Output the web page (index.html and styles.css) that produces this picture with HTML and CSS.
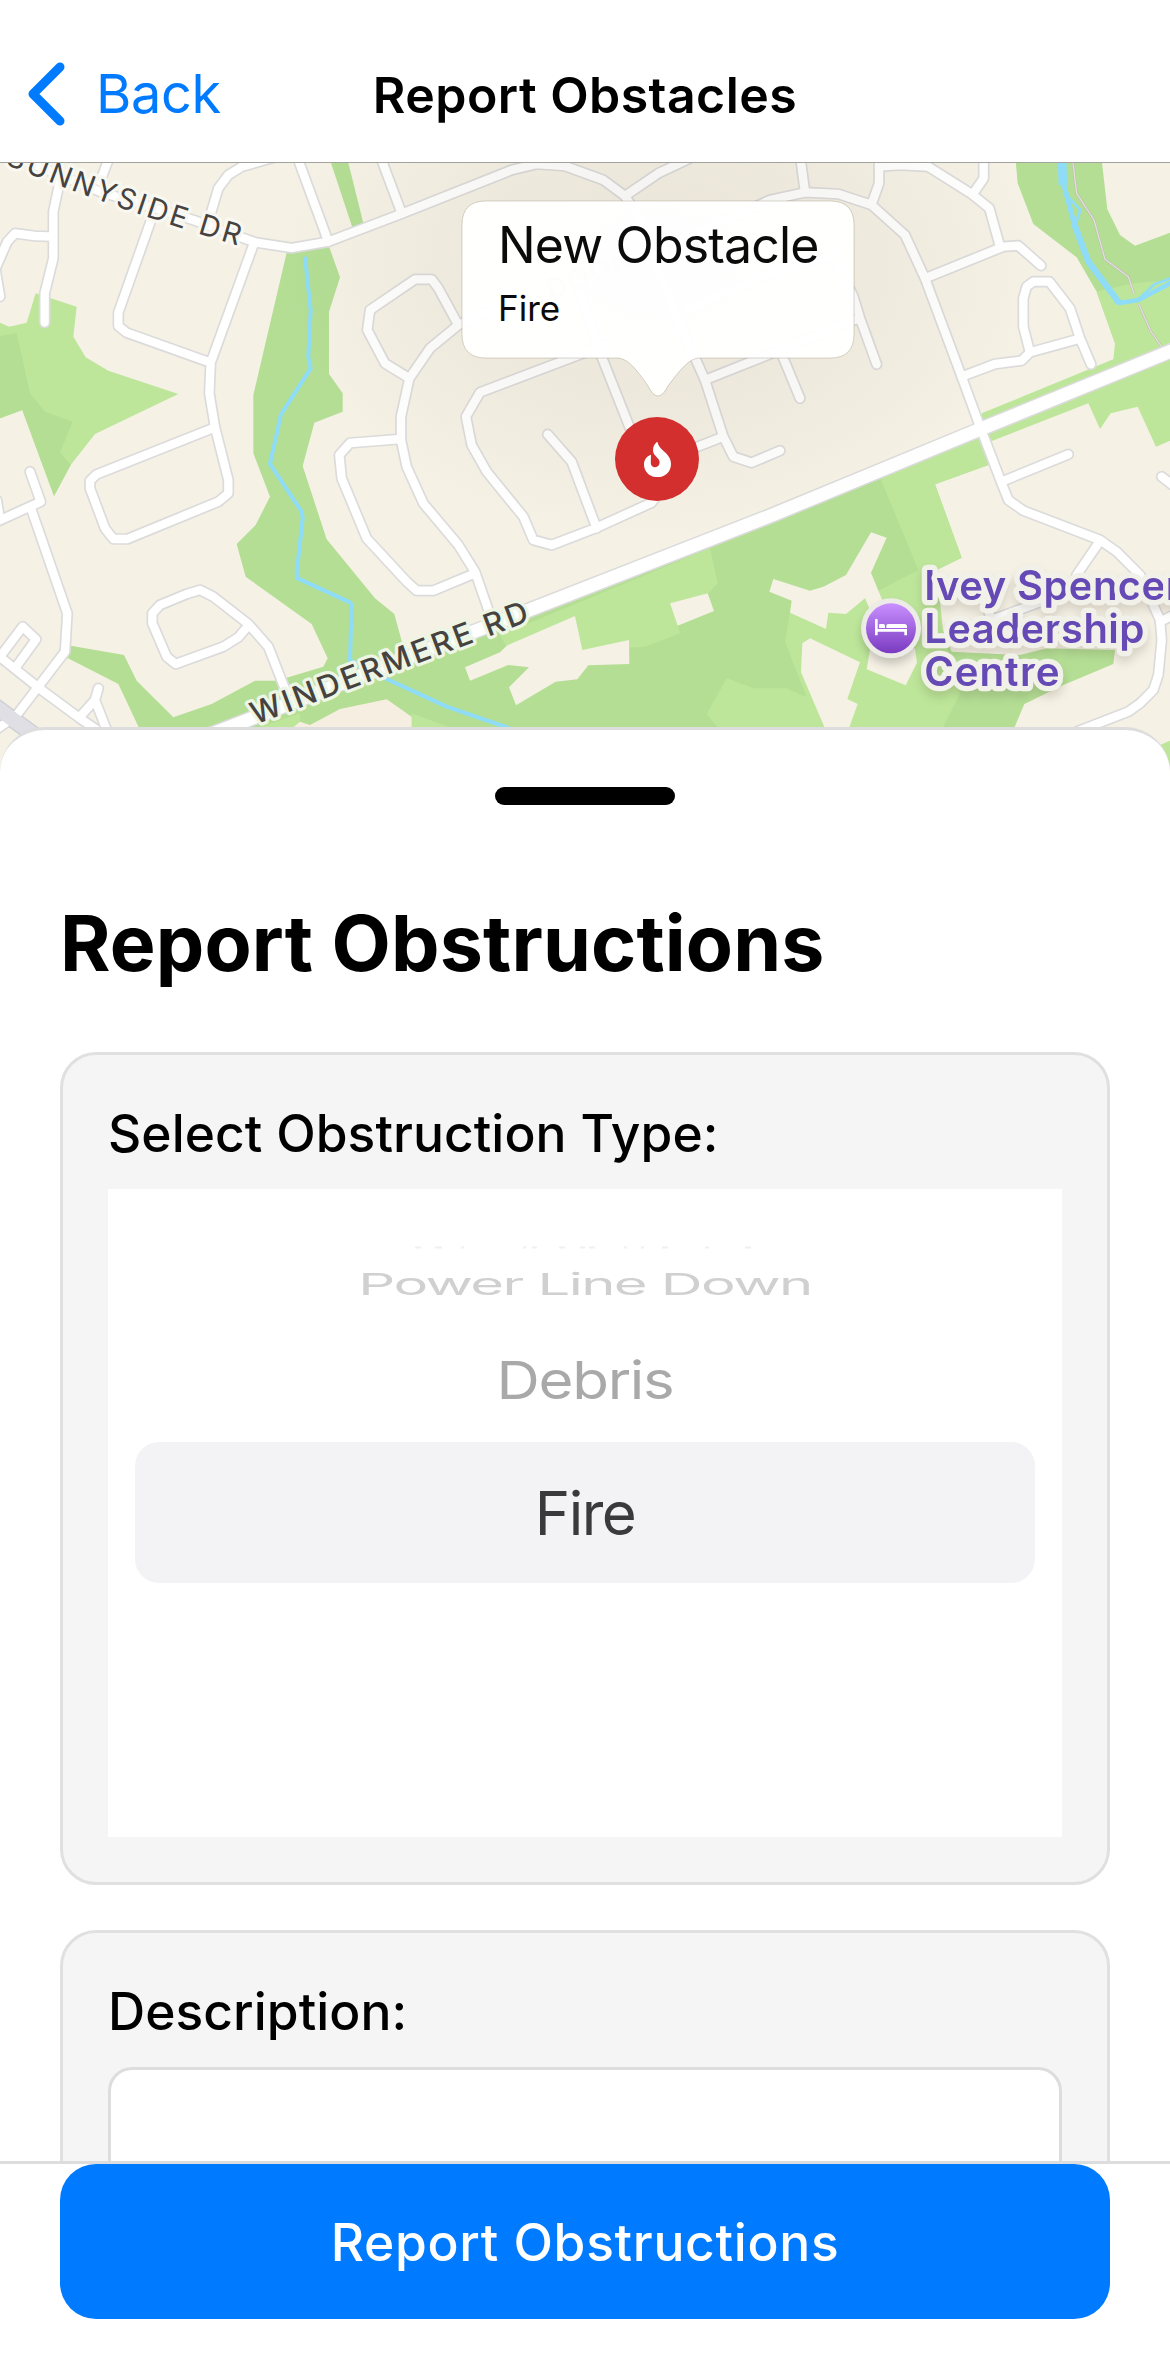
FILE: index.html
```html
<!DOCTYPE html>
<html lang="en">
<head>
<meta charset="utf-8">
<title>Report Obstacles</title>
<link rel="stylesheet" href="styles.css">
</head>
<body>
<div class="screen">
  <header class="nav">
    <a class="nav-back">
      <svg class="nav-chevron" viewBox="0 0 38 64" width="38" height="64"><path d="M33 5 6 32l27 27" fill="none" stroke="currentColor" stroke-width="9" stroke-linecap="round" stroke-linejoin="round"/></svg>
      <span class="nav-back-text">Back</span>
    </a>
    <h1 class="nav-title">Report Obstacles</h1>
  </header>

  <section class="map">
    <svg class="map-canvas" viewBox="0 489 3510 1911" width="1170" height="637">
      <defs>
        <linearGradient id="poi" x1="0" y1="0" x2="0" y2="1"><stop offset="0" stop-color="#c98fff"/><stop offset="1" stop-color="#7a3bc0"/></linearGradient>
        <radialGradient id="shade"><stop offset="0" stop-color="#5a5030" stop-opacity=".075"/><stop offset=".5" stop-color="#5a5030" stop-opacity=".05"/><stop offset="1" stop-color="#5a5030" stop-opacity="0"/></radialGradient>
        <filter id="soft" x="-20%" y="-20%" width="140%" height="140%"><feGaussianBlur stdDeviation="14"/></filter>
        <g id="streets">
          <path d="M325 480 300 545M180 540 160 635V775L134 880V968M160 710 105 708 45 700 22 725-20 820M-15 800 0 890"/>
          <path d="M455 655 355 938V978L380 998 632 1088M760 735 632 1088 628 1180 645 1282 685 1440V1480L655 1505 382 1617H340L315 1585 270 1465V1442L290 1423 645 1282"/>
          <path d="M-30 440 300 575 580 660 765 727 875 744 985 725 1200 643 1535 510 1610 492 1695 498 1810 540 1875 588 1975 520 2080 470"/>
          <path d="M625 665 655 565 685 525 725 500 830 470M895 480 985 725M1145 480 1205 640"/>
          <path d="M1875 588 1915 650 2025 940 2115 1140 2170 1310 2200 1370 2255 1388 2340 1352M2080 1345 2170 1310"/>
          <path d="M2050 720 2310 600 2415 577 2515 582 2615 615 2715 705 2775 835 2885 1130 2940 1280 3005 1450 3025 1500 3070 1532 3300 1620 3350 1655 3420 1725 3480 1860 3485 1920 3475 2025 3460 2070 3420 2110 3385 2135 3230 2195"/>
          <path d="M2402 480 2415 577M2637 480V550L2615 612M2637 500 2700 495 2785 500 2915 582 2968 625 3000 740M2951 480V535L2920 580M2775 835 3010 740 3055 737 3123 797"/>
          <path d="M2885 1130 2985 1092 3065 1082 3090 1057 3232 1018M3088 1050 3070 980V895L3080 860 3100 845H3148L3210 925 3240 1015 3273 1093"/>
          <path d="M2060 930 2360 800 2500 765 2560 890 2580 955 2630 1093M2340 1050 2400 1195M2115 1140 2340 1050 2575 955"/>
          <path d="M1228 1135 1155 1090 1102 990 1110 930 1245 838H1295L1315 865 1375 975 1290 1045 1228 1135 1203 1250V1320L1220 1400 1270 1510 1375 1635 1425 1715 1465 1830"/>
          <path d="M1375 975 1540 900M1203 1317 1050 1329 1018 1365 1025 1435 1100 1615 1220 1745 1250 1772H1300L1420 1722"/>
          <path d="M1820 1033 1440 1177 1398 1250 1415 1335 1460 1415 1570 1550 1600 1620 1655 1635 1785 1585 1955 1508 1975 1480M1790 1585 1715 1385 1643 1303M1740 870 1805 1070 1890 1285"/>
          <path d="M3005 1445 3205 1363M3485 1430 3530 1465M3295 1630 3230 1725M3530 1840 3480 1865M2960 1820 2975 1860 3230 1765"/>
          <path d="M90 1415 122 1505-20 1570M-10 1500 0 1560M93 1525 202 1840 195 1955 50 2145-20 2195M-20 1955 118 2065 240 2155 320 2210"/>
          <path d="M0 1970 68 1880 108 1918 45 2005M295 2065 285 2100 240 2150M285 2100 320 2190"/>
          <path d="M860 2080 805 1940 745 1872 640 1790 600 1770 560 1782 480 1815 457 1840V1870L500 1970 527 1992 670 1940 715 1912 742 1880"/>
        </g>
        <path id="sunnyside" d="M14 492Q350 630 716 737"/>
      </defs>

      <rect x="0" y="480" width="3510" height="1930" fill="#f5f1e5"/>

      <!-- parkland -->
      <g fill="#b3de94">
        <path d="M860 758 988 742 1020 832 987 935V1122L1028 1180V1235L943 1268 908 1398 980 1618 1125 1795 1183 1842 1215 1960 1580 1835 2940 1288 2965 1395 2805 1453 2885 1673 2810 1710 2800 1820 2855 1955 3060 1965 3140 1945 3345 1950 3340 1992 3190 2055 3073 2112 3040 2190H420L355 2052 198 1972 212 1937 372 1965 410 2042 520 2152 635 2112 765 2042H830L970 2000 983 1975 935 1872 737 1730 710 1632 767 1575 810 1490 760 1360V1185Z"/>
        <path d="M990 480H1043L1090 670 1057 682Z"/>
        <path d="M3047 480 3053 550 3100 672 3230 772 3290 875 3345 1030 3510 1050V698L3405 737 3360 705 3322 628 3305 480Z"/>
      </g>
      <g fill="#bde69a">
        <path d="M0 968 28 980 80 968 107 880 230 920 220 1010 257 1072 325 1112 535 1182 285 1302 212 1395 162 1488 100 1320 67 1230 0 1255Z"/>
        <path d="M1500 1905 2130 1645 2153 1750 2125 1780 2010 1810 2040 1900 1935 1940 1745 1950 1725 1848 1520 1940Z"/>
        <path d="M2640 1432 2960 1290 2965 1395 2805 1453 2885 1673 2810 1710 2830 1900 2880 2080 2825 2190H2160L2120 2142 2180 2035 2260 2065H2360L2420 2092 2355 1925 2375 1805 2600 1790 2755 1710Z"/>
        <path d="M3290 875 3345 1030 3340 1078 2945 1240 2950 1290 3510 1050V840L3400 850Z"/>
        <path d="M2940 1288 3510 1053V1322L3468 1340 3413 1220 3332 1240 3300 1287 3265 1210 2970 1325Z"/>
        <path d="M755 2190 900 2140V2190ZM1235 2140 1370 2190H1235ZM3510 2222 3480 2235 3510 2300Z"/>
      </g>
      <path fill="#b3de94" d="M0 1008 50 1000 90 1180 135 1235 218 1265 180 1357 212 1395 162 1488 100 1320 67 1230 0 1255Z"/>
      <g fill="#f5f1e5">
        <path d="M1395 2002 1500 1957 1520 1937 1725 1848 1747 1950 1887 1920 1888 1992 1765 1996 1732 2038 1667 2045 1548 2116 1527 2062 1587 2002 1525 1995 1410 2042Z"/>
        <path d="M2010 1810 2123 1780 2142 1833 2033 1877Z"/>
        <path d="M2320 1737 2430 1772 2470 1760 2538 1725 2613 1597 2660 1613 2613 1718 2655 1820 2610 1830 2595 1795 2538 1842 2485 1838 2478 1887 2370 1838 2375 1802 2308 1775Z"/>
        <path d="M2430 1915 2580 1987 2542 2097 2573 2112 2545 2190H2477L2403 2017 2407 1930Z"/>
        <path d="M2610 1950 2745 1945 2751 1988 2717 2056 2600 2008Z"/>
        <path d="M1160 2098 1235 2150V2190H870L900 2165 930 2175 1020 2127Z" fill="#f6eee0"/>
      </g>

      <!-- creeks and trail -->
      <g fill="none" stroke="#8edcf7" stroke-linejoin="round" stroke-linecap="butt">
        <path stroke-width="12" d="M915 770 932 930 925 1070 932 1105 843 1243 810 1392 905 1535 908 1555 890 1720 893 1735 1050 1807 1055 1815 1050 1980 1140 2028 1215 2062 1340 2120 1530 2185"/>
        <path stroke-width="26" d="M3186 480 3189 555"/>
        <path stroke-width="15" d="M3189 545 3225 680"/>
        <path stroke-width="19" d="M3222 670 3265 785 3357 908"/>
        <path stroke-width="14" d="M3345 900 3357 909 3415 900 3520 845"/>
        <path stroke-width="8" d="M3190 575 3241 630 3225 680M3415 898 3465 852 3520 832"/>
      </g>
      <g fill="none" stroke-linejoin="round">
        <path stroke="#bdb9b4" stroke-width="7" d="M3218 480 3230 580 3282 660 3315 778 3385 830 3402 882M3416 912 3453 995 3488 1045"/>
        <path stroke="#e5e0dd" stroke-width="4" d="M3218 480 3230 580 3282 660 3315 778 3385 830 3402 882M3416 912 3453 995 3488 1045"/>
      </g>

      <!-- streets -->
      <g fill="none" stroke-linecap="round" stroke-linejoin="round">
        <use href="#streets" stroke="#dcdbdb" stroke-width="35"/>
        <path stroke="#dcdbdb" stroke-width="48" d="M620 2208 1580 1833 2310 1548 2940 1288 3530 1046"/>
        <path stroke="#cfcfd6" stroke-width="52" d="M-30 2108 130 2225"/>
        <use href="#streets" stroke="#fff" stroke-width="25"/>
        <path stroke="#fff" stroke-width="39" d="M620 2208 1580 1833 2310 1548 2940 1288 3530 1046"/>
        <path stroke="#dfdfe5" stroke-width="44" d="M-30 2108 130 2225"/>
      </g>

      <ellipse cx="1975" cy="800" rx="1150" ry="820" fill="url(#shade)"/>

      <!-- labels -->
      <g class="street-label">
        <text font-size="87"><textPath href="#sunnyside" textLength="742">SUNNYSIDE DR</textPath></text>
        <text class="street-label-strong" font-size="92" textLength="882" transform="translate(766 2174) rotate(-20.7)">WINDERMERE RD</text>
        <text class="street-label-faint" font-size="84" textLength="430" transform="translate(1652 900) rotate(-20.5)">DOON DR</text>
      </g>
      <g class="place-label">
        <text x="2773" y="1800" textLength="772">Ivey Spencer</text>
        <text x="2773" y="1928" textLength="660">Leadership</text>
        <text x="2773" y="2058" textLength="406">Centre</text>
      </g>
      <circle cx="2673" cy="1903" r="88" fill="#000" opacity=".2" filter="url(#soft)"/>
      <circle cx="2673" cy="1885" r="90" fill="#ecebe6"/>
      <circle cx="2673" cy="1885" r="75" fill="url(#poi)"/>
      <path fill="#fff" d="M2625 1860q0-4 4-4t4 4V1887H2721V1906H2713V1895H2633V1906H2625ZM2637 1884V1875q0-3 3-3H2650q5 0 5 5V1884ZM2659 1884V1877q0-5 5-5H2713q8 0 8 8V1884Z"/>
    </svg>

    <div class="callout">
      <svg class="callout-shape" viewBox="0 0 392 196" width="392" height="196"><path d="M24 0H368Q392 0 392 24V133Q392 157 368 157H238C227 157 218 169 206 185Q196 205 186 185C175 169 166 157 155 157H24Q0 157 0 133V24Q0 0 24 0Z"/></svg>
      <strong class="callout-title">New Obstacle</strong>
      <span class="callout-text">Fire</span>
    </div>
    <div class="pin">
      <svg viewBox="0 0 27 35" width="27" height="35"><path fill="#fff" d="M12.8 0C10.4 2.1 9 4.8 9 8.2 9 12 12 14 14 16.5c3.2 3.600 1.300 8.700-2.800 8.700-3.100 0-4.700-2.300-4.400-5.200l.2-7.300C2.500 14.300 0 18 0 22.400 0 29.800 6 35.200 13.500 35.200S27 29.800 27 22c0-5-2.500-8.400-6-11.800C17.800 7.200 14.200 4.500 13.800.4Z"/></svg>
    </div>
  </section>

  <main class="sheet">
    <div class="grabber"></div>
    <h2 class="sheet-title">Report Obstructions</h2>
    <section class="card">
      <h3 class="card-label card-label-type">Select Obstruction Type:</h3>
      <div class="picker">
        <svg class="picker-far" viewBox="0 0 350 3" width="350" height="3"><path d="M5 1.500h6M25 1.500h7M51 1.500h3M113 1.500h3M122 1.500h5M149 1.500h6M170 1.500h5M179 1.500h6M214 1.500h3M231 1.500h3M252 1.500h6M295 1.500h4M335 1.500h6" stroke="#f0f0f0" stroke-width="2"/></svg>
        <div class="option option-second"><span>Power Line Down</span></div>
        <div class="option option-first"><span>Debris</span></div>
        <div class="option option-selected"><span>Fire</span></div>
      </div>
    </section>
    <section class="card">
      <h3 class="card-label card-label-desc">Description:</h3>
      <div class="textarea"></div>
    </section>
  </main>

  <footer class="footer">
    <button class="submit"><span>Report Obstructions</span></button>
  </footer>
</div>
</body>
</html>
```
FILE: styles.css
```css
* { box-sizing: border-box; }

body {
  margin: 0;
  background: #fff;
  color: #000;
  font-family: Inter, "Liberation Sans", sans-serif;
}

h1, h2, h3 { margin: 0; }

.screen {
  display: flex;
  flex-direction: column;
  width: 1170px;
  height: 2357px;
  overflow: hidden;
}

/* Navigation bar */
.nav {
  display: grid;
  grid-template-columns: 1fr auto 1fr;
  align-items: start;
  height: 163px;
  flex: none;
  padding: 61px 0 0 27px;
  border-bottom: 1px solid #a3a39d;
  background: #fff;
}

.nav-back {
  display: flex;
  align-items: center;
  height: 65px;
  gap: 31px;
  color: #007aff;
}

.nav-back-text { font-size: 54px; letter-spacing: -.3px; }

.nav-title {
  margin-left: -27px;
  line-height: 69px;
  font-size: 50px;
  font-weight: 600;
  letter-spacing: .45px;
  white-space: nowrap;
}

/* Map */
.map {
  position: relative;
  height: 637px;
  flex: none;
}

.map-canvas { display: block; }

.street-label text {
  fill: #45423f;
  stroke: #f8f7f0;
  stroke-width: 20px;
  stroke-linejoin: round;
  paint-order: stroke;
}

.street-label .street-label-strong { font-weight: 500; stroke: #edf5e4; }

.street-label .street-label-faint { fill: #c5c3bf; stroke: none; }

.place-label {
  font-size: 121px;
  font-weight: 600;
  fill: #6549b5;
  stroke: #f1f1ea;
  stroke-width: 32px;
  stroke-linejoin: round;
  paint-order: stroke;
  filter: drop-shadow(0 18px 14px rgba(60, 50, 30, .16));
}

.callout {
  position: absolute;
  left: 462px;
  top: 38px;
  display: flex;
  flex-direction: column;
  width: 392px;
  height: 196px;
  padding: 14px 0 0 36px;
  color: #0b0b0b;
}

.callout-shape {
  position: absolute;
  left: 0;
  top: 0;
  overflow: visible;
  fill: rgba(255, 255, 255, .965);
  stroke: rgba(120, 110, 80, .28);
  stroke-width: 1px;
}

.callout-title, .callout-text { position: relative; white-space: nowrap; font-weight: 400; }

.callout-title { font-size: 50px; line-height: 60px; letter-spacing: -.85px; }

.callout-text { margin-top: 10px; font-size: 35px; line-height: 46px; }

.pin {
  position: absolute;
  left: 615px;
  top: 254px;
  display: flex;
  align-items: center;
  justify-content: center;
  width: 84px;
  height: 84px;
  border-radius: 50%;
  background: #d32f2f;
}

/* Bottom sheet */
.sheet {
  position: relative;
  display: flex;
  flex-direction: column;
  flex: 1;
  min-height: 0;
  margin-top: -73px;
  padding: 57px 60px 0;
  border-top: 3px solid #ddd;
  border-radius: 45px 45px 0 0;
  background: #fff;
  overflow: hidden;
}

.grabber {
  align-self: center;
  flex: none;
  width: 180px;
  height: 18px;
  border-radius: 9px;
  background: #000;
}

.sheet-title {
  margin-top: 92px;
  line-height: 92px;
  font-size: 77px;
  font-weight: 700;
  letter-spacing: .15px;
  white-space: nowrap;
}

.card {
  display: flex;
  flex-direction: column;
  flex: none;
  margin-top: 45px;
  padding: 45px;
  border: 3px solid #e0e0e0;
  border-radius: 36px;
  background: #f5f5f5;
}

.sheet-title + .card { margin-top: 63px; }

.card-label {
  line-height: 66px;
  margin-bottom: 23px;
  font-size: 51.5px;
  font-weight: 500;
  letter-spacing: .06px;
  white-space: nowrap;
}

.picker {
  display: flex;
  flex-direction: column;
  align-items: center;
  height: 648px;
  padding-top: 57px;
  background: #fff;
}

.picker-far { flex: none; }

.option {
  display: flex;
  align-items: center;
  justify-content: center;
  flex: none;
  white-space: nowrap;
  font-size: 60px;
}

.option span { display: block; }

.option-second { height: 69px; }
.option-second span { color: #d0d0d0; font-size: 58px; letter-spacing: -1.6px; transform: scaleY(.52); }

.option-first { height: 124px; }
.option-first span { color: #a9a9a9; letter-spacing: -1.3px; transform: scaleY(.87); }

.option-selected {
  width: 900px;
  height: 141px;
  border-radius: 24px;
  background: #f3f3f6;
  color: #3a3a3c;
  letter-spacing: -1.5px;
}

.textarea {
  height: 300px;
  border: 3px solid #ddd;
  border-radius: 24px;
  background: #fff;
}

/* Footer */
.footer {
  position: relative;
  flex: none;
  height: 196px;
  padding: 0 60px;
  border-top: 3px solid #ddd;
  background: #fff;
}

.submit {
  display: flex;
  align-items: center;
  justify-content: center;
  width: 100%;
  height: 155px;
  padding: 0;
  border: 0;
  border-radius: 36px;
  background: #007aff;
  color: #fff;
  font: 500 51.5px Inter, "Liberation Sans", sans-serif;
  letter-spacing: .7px;
}
```
